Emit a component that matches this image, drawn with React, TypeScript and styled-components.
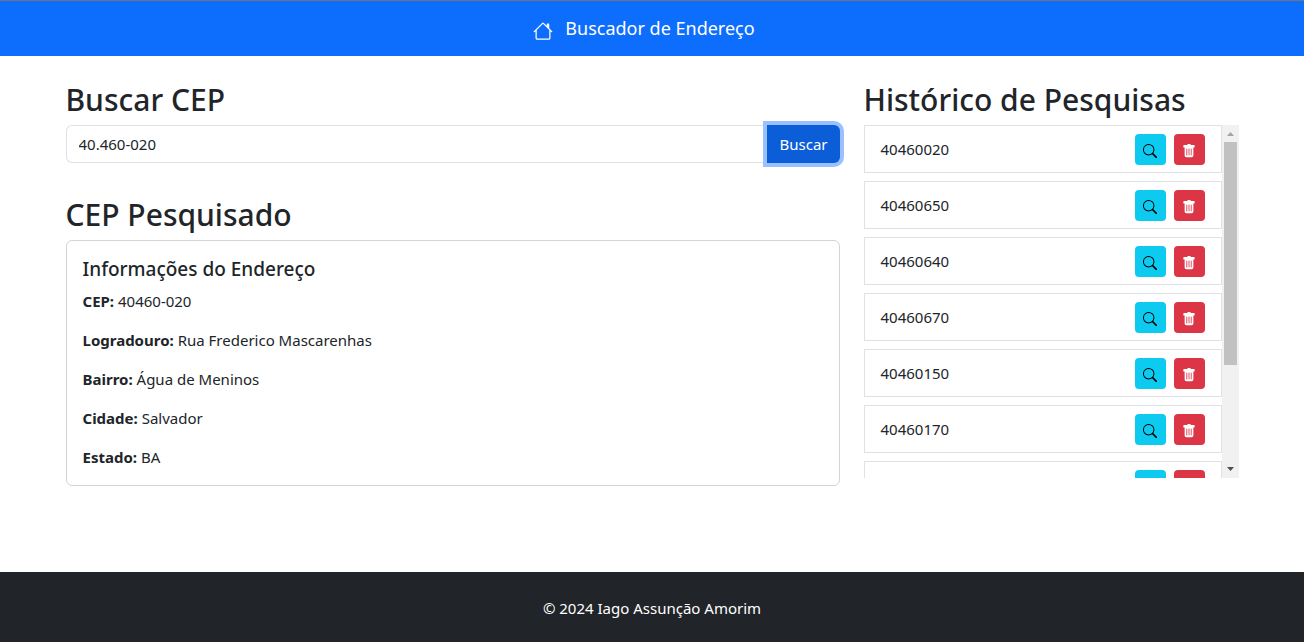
import React, { useState } from "react";
import styled, { createGlobalStyle } from "styled-components";
import { BsHouse, BsSearch, BsTrashFill } from "react-icons/bs";

const GlobalStyle = createGlobalStyle`
  *, *::before, *::after { box-sizing: border-box; }
  body {
    margin: 0;
    background: #fff;
    color: #212529;
    font-family: "Noto Sans", "Open Sans", "Liberation Sans", sans-serif;
    font-size: 15px;
    line-height: 24px;
  }
`;

const Page = styled.div`
  display: flex;
  flex-direction: column;
  min-height: 100vh;
`;

const Navbar = styled.header`
  display: flex;
  justify-content: center;
  padding: 12px;
  border-top: 1px solid #6c757d;
  background: #0d6efd;
`;

const Brand = styled.a`
  display: flex;
  align-items: center;
  gap: 12px;
  margin-right: 16px;
  color: #fff;
  font-size: 18px;
  line-height: 31px;
  text-decoration: none;

  svg { margin-top: 4px; }
`;

const Main = styled.main`
  display: grid;
  grid-template-columns: minmax(0, 2fr) minmax(0, 1fr);
  align-items: start;
  flex: 1;
  width: 100%;
  max-width: 1197px;
  margin: 0 auto;
  padding: 24px 0;
`;

const Column = styled.div`
  display: flex;
  flex-direction: column;
  gap: 32px;
  padding: 0 12px;
`;

const Section = styled.section`
  display: flex;
  flex-direction: column;
`;

const Heading = styled.h2`
  margin: 0 0 6px;
  font-size: 30px;
  font-weight: 500;
  line-height: 39px;
`;

const SearchForm = styled.form`
  display: flex;
`;

const CepInput = styled.input`
  flex: 1;
  min-width: 0;
  height: 38px;
  padding: 6px 12px;
  border: 1px solid #dee2e6;
  border-right: 0;
  border-radius: 6px 0 0 6px;
  color: inherit;
  font: inherit;
  outline: 0;
`;

const SubmitButton = styled.button`
  height: 38px;
  padding: 0 12px;
  border: 0;
  border-radius: 0 6px 6px 0;
  background: #0b5ed7;
  color: #fff;
  font: inherit;
  box-shadow: 0 0 0 4px #98c1fe;
`;

const Card = styled.article`
  padding: 16px;
  border: 1px solid #d3d4d5;
  border-radius: 6px;
`;

const CardTitle = styled.h5`
  margin: 0 0 8px;
  font-size: 19px;
  font-weight: 500;
  line-height: 24px;
`;

const Field = styled.p`
  margin: 0 0 15px;
  &:last-child { margin-bottom: 0; }
`;

const HistoryPanel = styled.div`
  display: flex;
  height: 353px;
`;

const History = styled.ul`
  display: flex;
  flex: 1;
  flex-direction: column;
  gap: 8px;
  margin: 0;
  padding: 0;
  list-style: none;
  overflow-y: auto;
  scrollbar-width: none;
`;

const HistoryItem = styled.li`
  display: flex;
  align-items: center;
  flex: none;
  gap: 8px;
  height: 48px;
  padding: 0 16px;
  border: 1px solid #dee2e6;
`;

const Cep = styled.span`
  flex: 1;
`;

const IconButton = styled.button<{ $tone: "info" | "danger" }>`
  display: flex;
  align-items: center;
  justify-content: center;
  width: 31px;
  height: 31px;
  padding: 4px 0 0;
  border: 0;
  border-radius: 4px;
  background: ${(p) => (p.$tone === "info" ? "#0dcaf0" : "#dc3545")};
  color: ${(p) => (p.$tone === "info" ? "#000" : "#fff")};
`;

const ScrollBar = styled.div`
  display: flex;
  flex-direction: column;
  width: 17px;
  background: #f1f1f1;
`;

const ScrollTrack = styled.div`
  flex: 1;
  padding: 0 2px;
`;

const ScrollThumb = styled.div`
  height: 70%;
  background: #c1c1c1;
`;

const ScrollArrow = styled.svg`
  display: block;
  width: 17px;
  height: 17px;
`;

const Footer = styled.footer`
  padding: 24px 12px 22px;
  background: #212529;
  color: #fff;
  text-align: center;
`;

const address = [
  ["CEP", "40460-020"],
  ["Logradouro", "Rua Frederico Mascarenhas"],
  ["Bairro", "Água de Meninos"],
  ["Cidade", "Salvador"],
  ["Estado", "BA"],
];

const searches = [
  "40460020",
  "40460650",
  "40460640",
  "40460670",
  "40460150",
  "40460170",
  "",
];

export default function App() {
  const [cep, setCep] = useState("40.460-020");
  return (
    <Page>
      <GlobalStyle />
      <Navbar>
        <Brand href="#">
          <BsHouse size={20} />
          Buscador de Endereço
        </Brand>
      </Navbar>
      <Main>
        <Column>
          <Section>
            <Heading id="cep-label">Buscar CEP</Heading>
            <SearchForm onSubmit={(e) => e.preventDefault()}>
              <CepInput
                aria-labelledby="cep-label"
                value={cep}
                onChange={(e) => setCep(e.target.value)}
              />
              <SubmitButton type="submit">Buscar</SubmitButton>
            </SearchForm>
          </Section>
          <Section>
            <Heading>CEP Pesquisado</Heading>
            <Card>
              <CardTitle>Informações do Endereço</CardTitle>
              {address.map(([label, value]) => (
                <Field key={label}>
                  <strong>{label}:</strong> {value}
                </Field>
              ))}
            </Card>
          </Section>
        </Column>
        <Column>
          <Section>
            <Heading>Histórico de Pesquisas</Heading>
            <HistoryPanel>
              <History>
                {searches.map((item) => (
                  <HistoryItem key={item}>
                    <Cep>{item}</Cep>
                    <IconButton $tone="info" aria-label={`Pesquisar ${item}`}>
                      <BsSearch size={14} />
                    </IconButton>
                    <IconButton $tone="danger" aria-label={`Excluir ${item}`}>
                      <BsTrashFill size={14} />
                    </IconButton>
                  </HistoryItem>
                ))}
              </History>
              <ScrollBar aria-hidden="true">
                <ScrollArrow viewBox="0 0 17 17" fill="#a3a3a3">
                  <path d="M5 11h7L8.500 7z" />
                </ScrollArrow>
                <ScrollTrack>
                  <ScrollThumb />
                </ScrollTrack>
                <ScrollArrow viewBox="0 0 17 17" fill="#505050">
                  <path d="M5 6h7L8.500 10z" />
                </ScrollArrow>
              </ScrollBar>
            </HistoryPanel>
          </Section>
        </Column>
      </Main>
      <Footer>© 2024 Iago Assunção Amorim</Footer>
    </Page>
  );
}
